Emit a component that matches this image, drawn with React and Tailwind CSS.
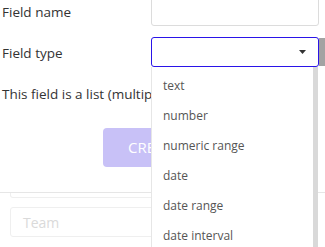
export default function App() {
  const items = ["text", "number", "numeric range", "date", "date range", "date interval"];
  return (
    <div className="relative w-[325px] h-[247px] overflow-hidden bg-white" style={{ fontFamily: '"Open Sans", sans-serif' }}>
      <div className="flex">
        <div className="w-[319px] flex flex-col pb-[25px]">
          <div className="flex items-center h-[30px] -mt-[4px]">
            <div className="w-[151px] pl-[2px] pt-[3px] text-[13.5px] text-[#333]">Field name</div>
            <div className="w-[168px] h-[30px] border border-[#dcdcdc] rounded-[3px]"></div>
          </div>
          <div className="flex items-center h-[30px] mt-[11px]">
            <div className="w-[151px] pl-[2px] pt-[2px] text-[13.5px] text-[#333]">Field type</div>
            <div className="w-[168px] h-[30px] border border-[#2a14e8] rounded-[3px] flex items-center justify-end pr-[12px]">
              <svg width="7" height="4" viewBox="0 0 7 4"><polygon points="0,0 7,0 3.5,4" fill="#333" /></svg>
            </div>
          </div>
          <div className="flex items-center h-[30px] mt-[11px]">
            <div className="pl-[2px] pt-[2px] text-[13.5px] text-[#333] whitespace-nowrap">This field is a list (multiple values)</div>
          </div>
          <div className="mt-[20px] flex">
            <button className="ml-[103px] h-[39px] px-[25px] rounded-[4px] bg-[#c8c1f7] text-white text-[15px]">CREATE</button>
          </div>
        </div>
        <div className="w-[6px]">
          <div className="mt-[38px] h-[28px] bg-[#a3a3a3]"></div>
        </div>
      </div>
      <div className="border-t border-[#e6e6e6] px-[10px]">
        <div className="h-[5px] border-x border-b border-[#efefef] rounded-b-[3px]"></div>
        <div className="mt-[9px] h-[30px] border border-[#efefef] rounded-[3px] flex items-center pl-[12px] pt-[1px] text-[14px] text-[#dadada]">Team</div>
      </div>
      <div className="absolute left-[151px] top-[67px] w-[167px] h-[190px] bg-white border-l border-[#e6e6e6] flex">
        <div className="flex-1 pt-[4px]">
          {items.map((t) => (
            <div key={t} className="h-[30px] flex items-center pl-[11px] text-[12px] text-[#555]">{t}</div>
          ))}
        </div>
        <div className="w-[5px] bg-[#d9d9d9]"></div>
      </div>
    </div>
  );
}
